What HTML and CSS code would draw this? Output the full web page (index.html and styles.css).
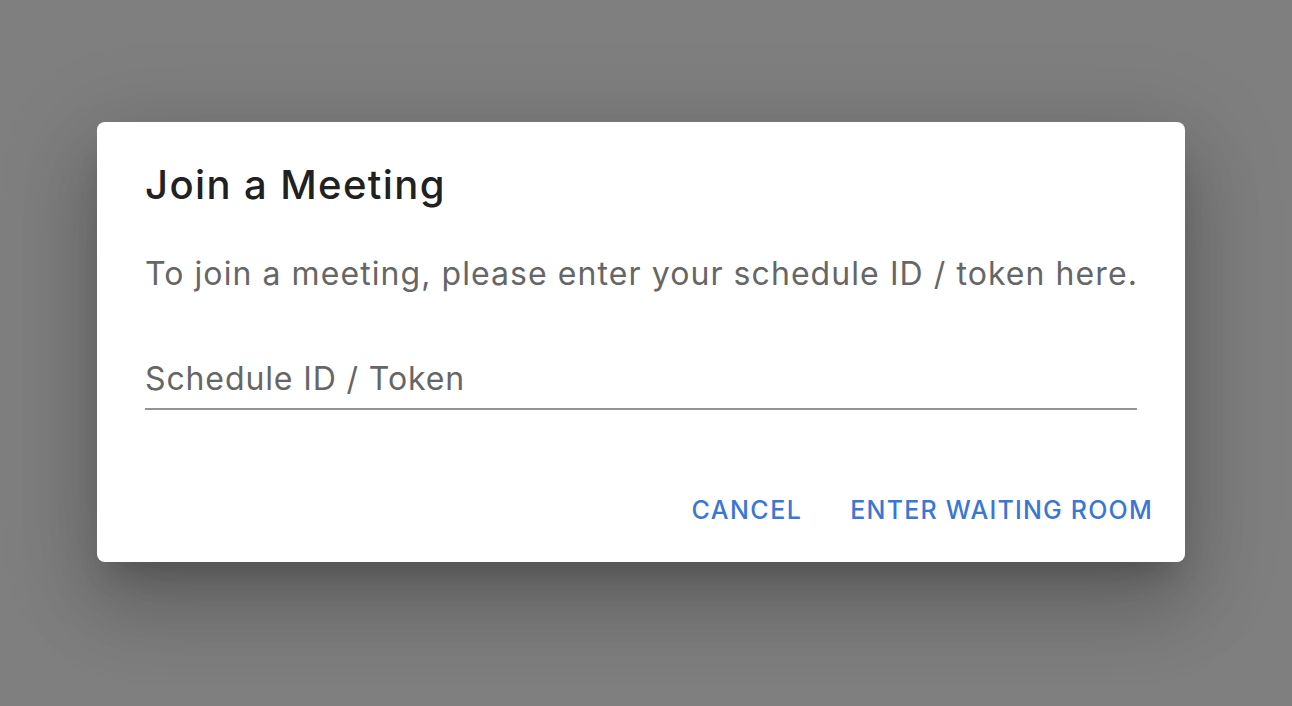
FILE: index.html
```html
<!DOCTYPE html>
<html lang="en">
<head>
<meta charset="utf-8">
<title>Join a Meeting</title>
<link rel="stylesheet" href="styles.css">
</head>
<body>
<div class="backdrop">
  <div class="dialog" role="dialog" aria-labelledby="dlg-title">
    <h2 class="dialog-title" id="dlg-title">Join a Meeting</h2>
    <div class="dialog-content">
      <p class="dialog-text">To join a meeting, please enter your schedule ID / token here.</p>
      <label class="field">
        <input class="field-input" type="text" placeholder="Schedule ID / Token">
      </label>
    </div>
    <div class="dialog-actions">
      <button class="btn btn-cancel" type="button">CANCEL</button>
      <button class="btn" type="button">ENTER WAITING ROOM</button>
    </div>
  </div>
</div>
</body>
</html>
```
FILE: styles.css
```css
html, body {
  margin: 0;
  padding: 0;
  height: 100%;
}
body {
  background: #7f7f7f;
  font-family: "Inter", "Noto Sans", sans-serif;
  overflow: hidden;
}
.backdrop {
  display: flex;
  align-items: flex-start;
  justify-content: flex-start;
  padding: 122px 0 0 97px;
}
.dialog {
  width: 1088px;
  height: 440px;
  box-sizing: border-box;
  background: #fff;
  border-radius: 8px;
  display: flex;
  flex-direction: column;
  box-shadow: 0 22px 30px -14px rgba(0,0,0,0.2),
              0 48px 76px 6px rgba(0,0,0,0.14),
              0 18px 92px 16px rgba(0,0,0,0.12);
}
.dialog-title {
  margin: 0;
  padding: 31px 48px 0;
  height: 64px;
  font-size: 40px;
  font-weight: 500;
  line-height: 64px;
  letter-spacing: 1.4px;
  color: #212121;
}
.dialog-content {
  padding: 33px 48px 0;
  flex: 1;
}
.dialog-text {
  margin: 0;
  font-size: 32px;
  line-height: 48px;
  letter-spacing: 1.07px;
  color: #666666;
  white-space: nowrap;
}
.field {
  display: block;
  margin-top: 57px;
  padding: 0 0 5px;
  border-bottom: 2px solid #949494;
}
.field-input {
  display: block;
  width: 100%;
  box-sizing: border-box;
  border: 0;
  outline: 0;
  padding: 0;
  margin: 0;
  background: transparent;
  font-family: "Inter", "Noto Sans", sans-serif;
  font-size: 32px;
  line-height: 48px;
  height: 48px;
  letter-spacing: 0.88px;
  color: #212121;
}
.field-input::placeholder {
  color: #666666;
  opacity: 1;
}
.dialog-actions {
  display: flex;
  justify-content: flex-end;
  align-items: center;
  gap: 16px;
  padding: 16px;
}
.btn {
  height: 72px;
  padding: 0 16px;
  border: 0;
  background: transparent;
  font-family: "Inter", "Noto Sans", sans-serif;
  font-size: 25px;
  font-weight: 500;
  letter-spacing: 1.2px;
  line-height: 28px;
  color: #3a77d5;
  border-radius: 8px;
  cursor: pointer;
}
.btn-cancel {
  letter-spacing: 1.5px;
}
```
